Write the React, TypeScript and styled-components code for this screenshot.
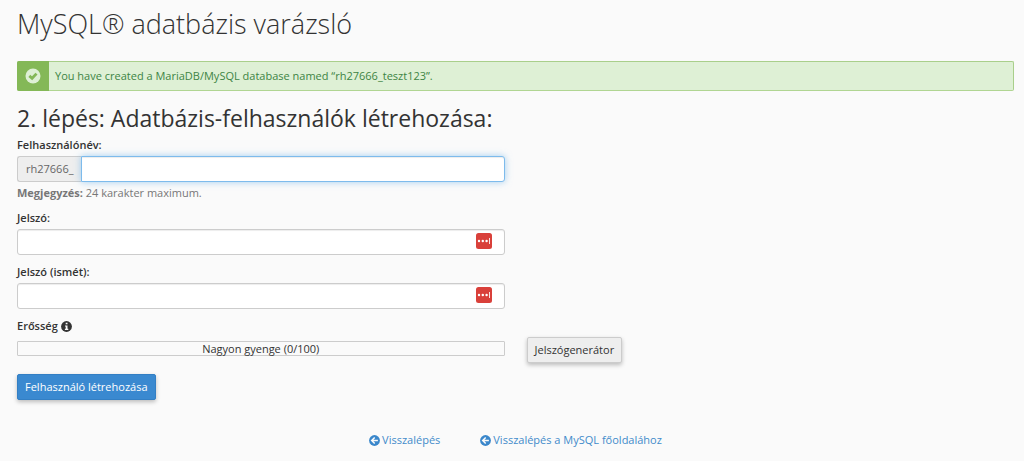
import React from "react";
import styled, { createGlobalStyle, css } from "styled-components";

const GlobalStyle = createGlobalStyle`
  *, *::before, *::after { box-sizing: border-box; }
  body {
    margin: 0;
    background: #fafafa;
    color: #333;
    font-family: "Open Sans", "Noto Sans", sans-serif;
    font-size: 11px;
    line-height: 16px;
  }
`;

const Page = styled.main`
  padding: 4px 10px 12px 17px;
`;

const Title = styled.h1`
  margin: 0 0 17px;
  font-size: 27px;
  line-height: 40px;
  font-weight: 300;
`;

const Alert = styled.div`
  display: flex;
  align-items: stretch;
  height: 30px;
  margin-bottom: 12px;
  border: 1px solid #a9cf8b;
  border-bottom-color: #b0d592;
  border-radius: 2px;
  background: #def0d5;
  color: #3d8444;
`;

const AlertIcon = styled.span`
  display: flex;
  align-items: center;
  justify-content: center;
  width: 32px;
  margin: -1px 0 -1px -1px;
  border-radius: 2px 0 0 2px;
  background: #84b857;
`;

const AlertText = styled.span`
  padding: 0 6px;
  line-height: 28px;
`;

const Heading = styled.h2`
  margin: 0 0 4px;
  font-size: 23px;
  line-height: 30px;
  font-weight: 500;
`;

const Form = styled.form`
  margin: 0;
`;

const Columns = styled.div`
  display: grid;
  grid-template-columns: 1fr 1fr;
  column-gap: 22px;
  align-items: end;
`;

const Field = styled.div`
  margin-bottom: 9px;
`;

const Label = styled.label`
  display: block;
  margin-bottom: 3px;
  font-weight: 600;
`;

const InputGroup = styled.div`
  display: flex;
  position: relative;
`;

const Prefix = styled.span`
  padding: 0 7px 0 8px;
  border: 1px solid #ccc;
  border-right: 0;
  border-radius: 3px 0 0 3px;
  background: #eee;
  color: #666;
  line-height: 24px;
`;

const TextInput = styled.input<{ $active?: boolean; $joined?: boolean }>`
  flex: 1;
  min-width: 0;
  height: 26px;
  padding: 0 9px;
  border: 1px solid #ccc;
  border-radius: 3px;
  outline: none;
  background: #fff;
  color: #555;
  font: inherit;
  box-shadow: inset 0 1px 1px rgba(0, 0, 0, 0.075);
  ${(p) => p.$joined && css`border-radius: 0 3px 3px 0;`}
  ${(p) =>
    p.$active &&
    css`
      border-color: #7dbbec;
      box-shadow: inset 0 1px 1px rgba(0, 0, 0, 0.075), 0 0 7px rgba(102, 175, 233, 0.6);
    `}
`;

const Manager = styled.svg`
  position: absolute;
  top: 4px;
  right: 13px;
`;

const Note = styled.p`
  margin: 3px 0 0;
  color: #777;

  strong { font-weight: 700; }
`;

const StrengthLabel = styled.div`
  display: flex;
  align-items: center;
  gap: 3px;
  margin-bottom: 7px;
  font-weight: 600;
`;

const Meter = styled.div`
  height: 15px;
  margin-bottom: 7px;
  border: 1px solid #ccc;
  border-radius: 1px;
  text-align: center;
  line-height: 13px;
`;

const Button = styled.button<{ $primary?: boolean }>`
  height: 26px;
  padding: 0 7px;
  border: 1px solid ${(p) => (p.$primary ? "#337fc4" : "#ccc")};
  border-radius: 2px;
  background: ${(p) => (p.$primary ? "#3a89d0" : "#eee")};
  color: ${(p) => (p.$primary ? "#fff" : "#333")};
  font: inherit;
  white-space: nowrap;
  box-shadow: 0 2px 4px rgba(0, 0, 0, 0.25);
`;

const Actions = styled.div`
  margin-top: 11px;
`;

const Links = styled.nav`
  display: flex;
  justify-content: center;
  gap: 40px;
  margin-top: 32px;
`;

const BackLink = styled.a`
  display: flex;
  align-items: center;
  gap: 2px;
  color: #428bca;
  text-decoration: none;
`;

const CheckIcon = () => (
  <svg width="16" height="16" viewBox="0 0 16 16" aria-hidden="true">
    <circle cx="8" cy="8" r="7.5" fill="#def0d5" />
    <path d="M4.3 7.9 7.1 10.3 11.5 5.6" fill="none" stroke="#84b857" strokeWidth="2.8" />
  </svg>
);

const InfoIcon = () => (
  <svg width="11" height="11" viewBox="0 0 11 11" aria-hidden="true">
    <circle cx="5.5" cy="5.5" r="5.4" fill="#333" />
    <path d="M4.7 1.8h1.8v1.5H4.7zM4 4.4h2.5v3.3h.8V9H3.9V7.7h.8V5.6H4z" fill="#fafafa" />
  </svg>
);

const BackIcon = () => (
  <svg width="11" height="11" viewBox="0 0 11 11" aria-hidden="true">
    <circle cx="5.5" cy="5.5" r="5.4" fill="#3a87cb" />
    <path d="M5.7 2.4 2.7 5.5l3 3.1M3 5.5h5.9" fill="none" stroke="#fafafa" strokeWidth="1.5" />
  </svg>
);

const PasswordManagerIcon = () => (
  <Manager width="16" height="16" viewBox="0 0 16 16" aria-hidden="true">
    <rect width="16" height="16" rx="2.5" fill="#d9403a" />
    <g fill="#fff">
      <circle cx="3" cy="8" r="1.2" />
      <circle cx="6.8" cy="8" r="1.2" />
      <circle cx="10.6" cy="8" r="1.2" />
      <rect x="13" y="5" width="1" height="6" opacity="0.85" />
    </g>
  </Manager>
);

const PasswordField = ({ id, label }: { id: string; label: string }) => (
  <Field>
    <Label htmlFor={id}>{label}</Label>
    <InputGroup>
      <TextInput id={id} type="password" />
      <PasswordManagerIcon />
    </InputGroup>
  </Field>
);

export default function App() {
  return (
    <Page>
      <GlobalStyle />
      <Title>MySQL® adatbázis varázsló</Title>
      <Alert role="status">
        <AlertIcon><CheckIcon /></AlertIcon>
        <AlertText>You have created a MariaDB/MySQL database named “rh27666_teszt123”.</AlertText>
      </Alert>
      <Heading>2. lépés: Adatbázis-felhasználók létrehozása:</Heading>
      <Form onSubmit={(e) => e.preventDefault()}>
        <Columns>
          <div>
            <Field>
              <Label htmlFor="user">Felhasználónév:</Label>
              <InputGroup>
                <Prefix>rh27666_</Prefix>
                <TextInput id="user" type="text" maxLength={24} $active $joined />
              </InputGroup>
              <Note><strong>Megjegyzés:</strong> 24 karakter maximum.</Note>
            </Field>
            <PasswordField id="password" label="Jelszó:" />
            <PasswordField id="password-again" label="Jelszó (ismét):" />
            <StrengthLabel>Erősség <InfoIcon /></StrengthLabel>
            <Meter>Nagyon gyenge (0/100)</Meter>
          </div>
          <div>
            <Button type="button">Jelszógenerátor</Button>
          </div>
        </Columns>
        <Actions>
          <Button type="submit" $primary>Felhasználó létrehozása</Button>
        </Actions>
      </Form>
      <Links>
        <BackLink href="#back"><BackIcon />Visszalépés</BackLink>
        <BackLink href="#mysql"><BackIcon />Visszalépés a MySQL főoldalához</BackLink>
      </Links>
    </Page>
  );
}
